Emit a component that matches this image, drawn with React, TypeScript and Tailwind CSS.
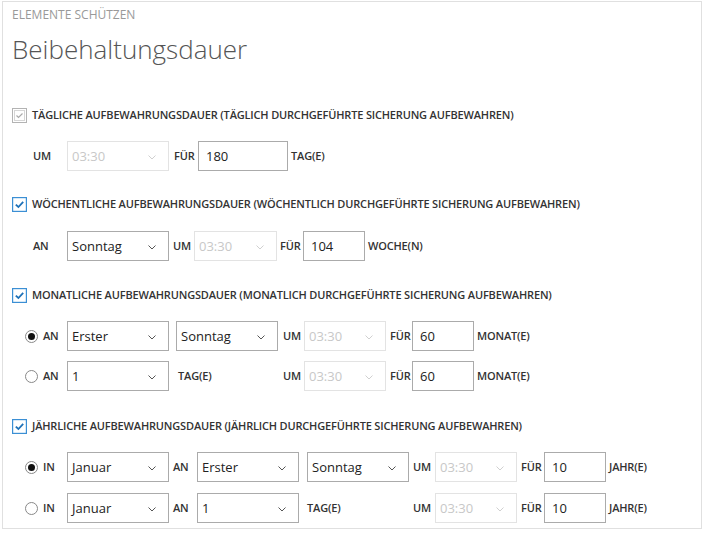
import React from 'react'

function Chevron({ muted }: { muted?: boolean }) {
  return (
    <svg width="8" height="5" viewBox="0 0 8 5" className="absolute right-[12px] top-[13px]">
      <path d="M0.5 0.5 L4 4 L7.5 0.5" fill="none" stroke={muted ? '#d0d0d0' : '#555'} strokeWidth="1" />
    </svg>
  )
}

function Select({ value, w, disabled, className = '' }: { value: string; w: string; disabled?: boolean; className?: string }) {
  return (
    <div
      className={`relative h-[30px] shrink-0 border bg-white pl-[4px] text-[13px] leading-[28px] ${
        disabled ? 'border-[#e3e3e3] text-[#c8c8c8]' : 'border-[#ababab] text-[#222]'
      } ${w} ${className}`}
    >
      {value}
      <Chevron muted={disabled} />
    </div>
  )
}

function Field({ value, w }: { value: string; w: string }) {
  return (
    <div className={`h-[30px] shrink-0 border border-[#ababab] bg-white pl-[7px] text-[13px] leading-[28px] text-[#222] ${w}`}>
      {value}
    </div>
  )
}

function Lbl({ children, className = '' }: { children: React.ReactNode; className?: string }) {
  return <div className={`shrink-0 text-[11px] font-semibold tracking-[-0.17px] text-[#333] ${className}`}>{children}</div>
}

function Check({ dim }: { dim?: boolean }) {
  if (dim) {
    return (
      <svg width="15" height="15" viewBox="0 0 15 15" className="shrink-0">
        <rect x="0.5" y="0.5" width="14" height="14" fill="#fff" stroke="#666" strokeDasharray="1 1" />
        <rect x="2.5" y="2.5" width="10" height="10" fill="#fff" stroke="#d6d6d6" />
        <path d="M4.5 7.5 L6.5 9.5 L10.5 5.5" fill="none" stroke="#aaa" strokeWidth="1.2" />
      </svg>
    )
  }
  return (
    <svg width="15" height="15" viewBox="0 0 15 15" className="shrink-0">
      <rect x="0.5" y="0.5" width="14" height="14" fill="#fff" stroke="#3b8fd4" strokeWidth="1.4" />
      <path d="M3.8 7.6 L6.4 10 L11.2 4.8" fill="none" stroke="#1f72b8" strokeWidth="1.8" />
    </svg>
  )
}

function Radio({ on }: { on?: boolean }) {
  return (
    <svg width="13" height="13" viewBox="0 0 13 13" className="shrink-0">
      <circle cx="6.5" cy="6.5" r="6" fill="#fff" stroke="#888" />
      {on && <circle cx="6.5" cy="6.5" r="3.5" fill="#111" />}
    </svg>
  )
}

function Heading({ dim, text }: { dim?: boolean; text: string }) {
  return (
    <div className="flex h-[15px] items-center">
      <Check dim={dim} />
      <Lbl className="ml-[5px]">{text}</Lbl>
    </div>
  )
}

export default function App() {
  return (
    <div className="h-[538px] w-[704px] overflow-hidden bg-white font-['Open_Sans',sans-serif]">
      <div className="ml-[2px] mt-[1px] h-[528px] w-[700px] border border-[#e0e0e0] pl-[9px]">
        <div className="mt-[5px] text-[12px] leading-[15px] text-[#999]">ELEMENTE SCHÜTZEN</div>
        <div className="mt-[10px] text-[26px] font-light leading-[34px] text-[#555]">Beibehaltungsdauer</div>

        <div className="mt-[42px]">
          <Heading dim text="TÄGLICHE AUFBEWAHRUNGSDAUER (TÄGLICH DURCHGEFÜHRTE SICHERUNG AUFBEWAHREN)" />
        </div>
        <div className="mt-[18px] flex h-[30px] items-center pl-[21px]">
          <Lbl className="w-[34px]">UM</Lbl>
          <Select value="03:30" w="w-[102px]" disabled />
          <Lbl className="w-[29px] pl-[5px]">FÜR</Lbl>
          <Field value="180" w="w-[90px]" />
          <Lbl className="pl-[3px]">TAG(E)</Lbl>
        </div>

        <div className="mt-[26px]">
          <Heading text="WÖCHENTLICHE AUFBEWAHRUNGSDAUER (WÖCHENTLICH DURCHGEFÜHRTE SICHERUNG AUFBEWAHREN)" />
        </div>
        <div className="mt-[19px] flex h-[30px] items-center pl-[21px]">
          <Lbl className="w-[34px]">AN</Lbl>
          <Select value="Sonntag" w="w-[102px]" />
          <Lbl className="w-[25px] pl-[4px]">UM</Lbl>
          <Select value="03:30" w="w-[83px]" disabled />
          <Lbl className="w-[26px] pl-[3px]">FÜR</Lbl>
          <Field value="104" w="w-[62px]" />
          <Lbl className="pl-[3px]">WOCHE(N)</Lbl>
        </div>

        <div className="mt-[27px]">
          <Heading text="MONATLICHE AUFBEWAHRUNGSDAUER (MONATLICH DURCHGEFÜHRTE SICHERUNG AUFBEWAHREN)" />
        </div>
        <div className="mt-[18px] flex h-[30px] items-center pl-[13px]">
          <Radio on />
          <Lbl className="w-[29px] pl-[5px]">AN</Lbl>
          <Select value="Erster" w="w-[102px]" />
          <Select value="Sonntag" w="w-[102px]" className="ml-[7px]" />
          <Lbl className="w-[26px] pl-[5px]">UM</Lbl>
          <Select value="03:30" w="w-[82px]" disabled />
          <Lbl className="w-[26px] pl-[4px]">FÜR</Lbl>
          <Field value="60" w="w-[62px]" />
          <Lbl className="pl-[3px]">MONAT(E)</Lbl>
        </div>
        <div className="mt-[10px] flex h-[30px] items-center pl-[13px]">
          <Radio />
          <Lbl className="w-[29px] pl-[5px]">AN</Lbl>
          <Select value="1" w="w-[102px]" />
          <Lbl className="ml-[7px] w-[102px] pl-[2px]">TAG(E)</Lbl>
          <Lbl className="w-[26px] pl-[5px]">UM</Lbl>
          <Select value="03:30" w="w-[82px]" disabled />
          <Lbl className="w-[26px] pl-[4px]">FÜR</Lbl>
          <Field value="60" w="w-[62px]" />
          <Lbl className="pl-[3px]">MONAT(E)</Lbl>
        </div>

        <div className="mt-[28px]">
          <Heading text="JÄHRLICHE AUFBEWAHRUNGSDAUER (JÄHRLICH DURCHGEFÜHRTE SICHERUNG AUFBEWAHREN)" />
        </div>
        <div className="mt-[18px] flex h-[30px] items-center pl-[13px]">
          <Radio on />
          <Lbl className="w-[29px] pl-[5px]">IN</Lbl>
          <Select value="Januar" w="w-[102px]" />
          <Lbl className="w-[28px] pl-[4px]">AN</Lbl>
          <Select value="Erster" w="w-[102px]" />
          <Select value="Sonntag" w="w-[102px]" className="ml-[8px]" />
          <Lbl className="w-[26px] pl-[4px]">UM</Lbl>
          <Select value="03:30" w="w-[82px]" disabled />
          <Lbl className="w-[27px] pl-[4px]">FÜR</Lbl>
          <Field value="10" w="w-[62px]" />
          <Lbl className="pl-[3px]">JAHR(E)</Lbl>
        </div>
        <div className="mt-[11px] flex h-[30px] items-center pl-[13px]">
          <Radio />
          <Lbl className="w-[29px] pl-[5px]">IN</Lbl>
          <Select value="Januar" w="w-[102px]" />
          <Lbl className="w-[28px] pl-[4px]">AN</Lbl>
          <Select value="1" w="w-[102px]" />
          <Lbl className="ml-[8px] w-[102px]">TAG(E)</Lbl>
          <Lbl className="w-[26px] pl-[4px]">UM</Lbl>
          <Select value="03:30" w="w-[82px]" disabled />
          <Lbl className="w-[27px] pl-[4px]">FÜR</Lbl>
          <Field value="10" w="w-[62px]" />
          <Lbl className="pl-[3px]">JAHR(E)</Lbl>
        </div>
      </div>
    </div>
  )
}
